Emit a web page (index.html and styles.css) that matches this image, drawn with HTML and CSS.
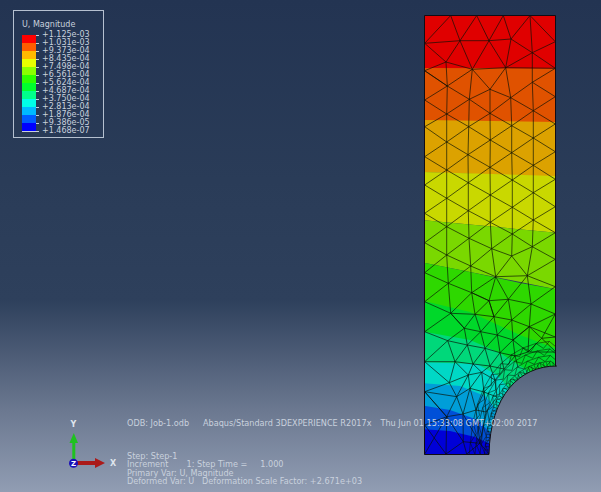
FILE: index.html
```html
<!DOCTYPE html>
<html lang="en">
<head>
<meta charset="utf-8">
<title>Abaqus viewport</title>
<link rel="stylesheet" href="styles.css">
</head>
<body>
<main class="viewport">
  <svg class="model" width="601" height="492" viewBox="0 0 601 492" aria-label="Deformed mesh contour">
    <defs>
      <path id="arc" d="M556.5 366C520 366 490 395 489 454"/>
      <path id="zig" class="ring" d="M556.5 366L550.7 361.1L545.8 366.9L539.6 362.8L535.5 369.4L529 366.5L526 373.9L519.4 372.1L517.2 380.1L510.6 379.5L509.4 387.9L502.9 388.7L502.7 397.5L496.4 400L497.1 409L491.3 413L493 422.100L487.5 428L490.2 437.3L485.4 445L489 454M550.7 361.1L539.6 362.8L529 366.5L519.4 372.1L510.6 379.5L502.9 388.7L496.4 400L491.3 413L487.5 428L485.4 445L484 458"/>
      <clipPath id="body"><path d="M424.5 15.5H555.5V366H556.5C520 366 490 395 489 454.5H424.5Z"/></clipPath>
    </defs>
    <g clip-path="url(#body)">
      <rect class="b1" x="420" y="10" width="140" height="60"/>
      <polygon class="b2" points="420,68 560,68.5 560,123 420,121"/>
      <polygon class="b3" points="420,120 560,122 560,177 420,172"/>
      <polygon class="b4" points="420,172 560,176 560,233 420,220"/>
      <polygon class="b5" points="420,220 560,233 560,290 420,262"/>
      <polygon class="b6" points="420,262 470,272 520,283 560,290 560,380 420,380"/>
      <polygon class="b7" points="420,300 470,312 520,335 560,350 560,400 420,400"/>
      <polygon class="b8" points="420,331 470,340 500,353 530,372 540,400 420,400"/>
      <polygon class="b9" points="420,362 477,364 497,375 515,395 500,430 420,430"/>
      <polygon class="b10" points="420,383 460,386 485,396 505,420 495,440 420,440"/>
      <polygon class="b11" points="420,405 450,410 478,420 495,438 495,460 420,460"/>
      <polygon class="b12" points="420,429 450,431 475,437 495,446 495,460 420,460"/>
      <g class="mesh">
        <path d="M450.7 15.5L424.7 43.3M450.7 15.5L460 40.7M476.7 15.5L460 40.7M476.7 15.5L489 40.7M503.3 15.5L489 40.7M503.3 15.5L511 39M530 15.5L511 39M530 15.5L532.3 52.7M530 15.5L555.3 41.7M424.7 43.3L460 40.7L489 40.7L511 39L532.3 52.7L555.3 41.7M424.7 43.3L446 62L460 40.7L472.3 69.3L489 40.7L505.7 67.7L511 39M505.7 67.7L532.3 52.7L555.3 68.3M424.7 70.7L446 62L472.3 69.3L505.7 67.7L555.3 68.3M424.7 70.7L447.3 86"/>
        <path d="M446 62L447.3 86L446.7 114L446.7 142L446.7 170L446.7 198.3L446.7 226.7L446.7 255L448.3 283.3L450.7 313.3M472.3 69.3L469.3 99.3L468.7 126.7L468 154.7L468.3 182.7L468.3 210.7L469 238.3L470.7 266L471.7 292.7L475 314.3M490 89.3L490 113.3L490.3 140L490 167.3L490.3 195L490.3 222.3L491.7 248.7L495.7 276.7M505.7 67.7L510.7 97.7L511.7 125.7L511.7 152.7L512.3 180L512.3 207.3L512.3 234L511.7 256M532.3 52.7L532.3 82.3L533.3 110.7L533.3 138L533.3 165.3L533.3 192.7L533.3 220L532.3 246.7L527.3 275.7"/>
        <path d="M424.7 70.7L447.3 86L469.3 99.3L490 113.3L511.7 125.7L533.3 138L555.3 151.7M424.7 100L446.7 114L468.7 126.7L490.3 140L511.7 152.7L533.3 165.3L555.3 179.3M424.7 126.7L446.7 142L468 154.7L490 167.3L512.3 180L533.3 192.7L555.3 206.7M424.7 156.7L446.7 170L468.3 182.7L490.3 195L512.3 207.3L533.3 220L555.3 232.7M424.7 185L446.7 198.3L468.3 210.7L490.3 222.3L512.3 234L532.3 246.7L555.3 259.3M424.7 213.3L446.7 226.7L469 238.3L491.7 248.7L511.7 256L527.3 275.7M424.7 242.7L446.7 255L470.7 266L495.7 276.7L508.3 299.3M424.7 272.7L448.3 283.3L471.7 292.7L489 300.7L494 316.7M424.7 301.7L450.7 313.3L464.3 328.3M472.3 69.3L490 89.3L510.7 97.7L533.3 110.7L555.3 124M532.3 82.3L555.3 96.7"/>
        <path d="M424.7 100L447.3 86L472.3 69.3M424.7 126.7L446.7 114L469.3 99.3L490 89.3L505.7 67.7M424.7 156.7L446.7 142L468.7 126.7L490 113.3L510.7 97.7L532.3 82.3L555.3 68.3M424.7 185L446.7 170L468 154.7L490.3 140L511.7 125.7L533.3 110.7L555.3 96.7M424.7 213.3L446.7 198.3L468.3 182.7L490 167.3L511.7 152.7L533.3 138L555.3 124M424.7 242.7L446.7 226.7L468.3 210.7L490.3 195L512.3 180L533.3 165.3L555.3 151.7M424.7 272.7L446.7 255L469 238.3L490.3 222.3L512.3 207.3L533.3 192.7L555.3 179.3M424.7 301.7L448.3 283.3L470.7 266L491.7 248.7L512.3 234L533.3 220L555.3 206.7M424.7 331.7L450.7 313.3L471.7 292.7L495.7 276.7L511.7 256L532.3 246.7L555.3 232.7M527.3 275.7L555.3 259.3"/>
        <path d="M495.7 276.7L527.3 275.7L555.3 286.7M527.3 275.7L531 304L555.3 286.7M508.3 299.3L527.3 275.7M495.7 276.7L489 300.7L508.3 299.3L531 304L555.3 314L529.3 326.7L555.3 337M471.7 292.7L489 300.7L475 314.3M508.3 299.3L494 316.7M508.3 299.3L511.7 320L531 304L529.3 326.7M450.7 313.3L475 314.3L494 316.7L511.7 320L529.3 326.7M489 300.7L494 316.7"/>
        <path d="M424.7 331.7L447.7 340.7L467.3 345L485 348.3L500 352.7L515 356L528 352L541.7 338.3L555.3 337M450.7 313.3L464.3 328.3L475 314.3L480.7 331.7L494 316.7L497.3 335L511.7 320L513 340L529.3 326.7L541.7 338.3L555.3 314M464.3 328.3L480.7 331.7L497.3 335L513 340L529.3 326.7M447.7 340.7L464.3 328.3L467.3 345L480.7 331.7L485 348.3L497.3 335L500 352.7L513 340L515 356M513 340L528 352L529.3 326.7M541.7 338.3L556 352L528 352M424.7 361.7L447.7 340.7L455 361.7L467.3 345L473 364L485 348.3L490 366L500 352.7L504 369L515 356L518 367M424.7 361.7L455 361.7L473 364L490 366L504 369M424.7 361.7L449.3 382.7L455 361.7L468.3 375L473 364L481.7 372.3L490 366L495 380L504 369M424.7 391.7L449.3 382.7L468.3 375L481.7 372.3L495 380M449.3 382.7L456.7 396.7L468.3 375L470 388.3L481.7 372.3L484 392L495 380L497 397M424.7 391.7L456.7 396.7L470 388.3L484 392L497 397M424.7 391.7L446.7 416.7L456.7 396.7L463 414L470 388.3L476 410L484 392L486 412L497 397M424.7 425L446.7 416.7L463 414L476 410L486 412M424.7 425L446 454L446.7 416.7L463.3 441.7L463 414L480 443.3L476 410M424.7 454L446.7 416.7M446 454L463.3 441.7L466.7 454L480 443.3L489 454M463.3 441.7L480 443.3L486 412M446.7 416.7L424.7 391.7"/>
        <use href="#zig"/>
        <use href="#zig" transform="translate(557 455) scale(1.06) translate(-557 -455)"/>
        <use href="#zig" transform="translate(557 455) scale(1.13) translate(-557 -455)"/>
        <use href="#zig" transform="translate(557 455) scale(1.21) translate(-557 -455)"/>
        <use href="#arc" class="ticks t1" transform="translate(557 455) scale(1.025) translate(-557 -455)"/>
      </g>
    </g>
    <path class="outline" d="M424.5 15.5H555.5V366H556.5C520 366 490 395 489 454.5H424.5Z"/>
  </svg>

  <section class="legend">
    <h2 class="legend-title">U, Magnitude</h2>
    <div class="scale">
      <div class="bar">
        <i class="swatch b1"></i><i class="swatch b2"></i><i class="swatch b3"></i><i class="swatch b4"></i>
        <i class="swatch b5"></i><i class="swatch b6"></i><i class="swatch b7"></i><i class="swatch b8"></i>
        <i class="swatch b9"></i><i class="swatch b10"></i><i class="swatch b11"></i><i class="swatch b12"></i>
      </div>
      <ul class="values">
        <li>+1.125e-03</li><li>+1.031e-03</li><li>+9.373e-04</li><li>+8.435e-04</li><li>+7.498e-04</li>
        <li>+6.561e-04</li><li>+5.624e-04</li><li>+4.687e-04</li><li>+3.750e-04</li><li>+2.813e-04</li>
        <li>+1.876e-04</li><li>+9.386e-05</li><li>+1.468e-07</li>
      </ul>
    </div>
  </section>

  <footer class="footer">
    <svg class="triad" width="62" height="62" viewBox="66 419 62 62" aria-label="Axes">
      <text class="axis" x="73.5" y="426.500" text-anchor="middle">Y</text>
      <text class="axis" x="113" y="465.500" text-anchor="middle">X</text>
      <path class="y-axis" d="M72.300 463V443H69.500L73.800 433L78 443H75.300V463Z"/>
      <path class="x-axis" d="M74 461H95V458L105 463L95 468V465H74Z"/>
      <circle class="z-axis" cx="73.500" cy="463.300" r="4.500"/>
      <text class="axis-z" x="73.500" y="466" text-anchor="middle">Z</text>
    </svg>
    <div class="info">
      <p class="info-head"><span class="odb">ODB: Job-1.odb</span><span class="solver">Abaqus/Standard 3DEXPERIENCE R2017x</span><span class="stamp">Thu Jun 01 15:33:08 GMT+02:00 2017</span></p>
      <p class="info-line">Step: Step-1</p>
      <p class="info-line">Increment       1: Step Time =     1.000</p>
      <p class="info-line">Primary Var: U, Magnitude</p>
      <p class="info-line">Deformed Var: U   Deformation Scale Factor: +2.671e+03</p>
    </div>
  </footer>
</main>
</body>
</html>
```

FILE: styles.css
```css
* { box-sizing: border-box; }
html, body { margin: 0; padding: 0; }
body { width: 601px; height: 492px; overflow: hidden; }

.viewport {
  position: relative;
  width: 601px;
  height: 492px;
  display: flex;
  flex-direction: column;
  justify-content: space-between;
  padding: 10px 0 6px 13px;
  font-family: "DejaVu Sans", sans-serif;
  font-size: 8px;
  color: #c9d1dd;
  background: linear-gradient(#233452 0, #2a3c58 180px, #2e405c 300px, #6b7890 410px, #919db3 492px);
}

.model { position: absolute; left: 0; top: 0; }
.mesh path { fill: none; stroke: #0a1206; stroke-width: .75; stroke-opacity: .9; }
.ring { fill: none; stroke: #0a1206; stroke-width: .6; stroke-opacity: .85; vector-effect: non-scaling-stroke; }
.ticks { fill: none; stroke: #0a1206; stroke-opacity: .7; }
.t1 { stroke-width: 4; stroke-dasharray: .6 2.4; }
.outline { fill: none; stroke: #120c14; stroke-width: 1; }

.b1 { fill: #e00000; background: #ff0000; }
.b2 { fill: #e05200; background: #ff5d00; }
.b3 { fill: #dca200; background: #ffb900; }
.b4 { fill: #c9d800; background: #e8ff00; }
.b5 { fill: #7ad800; background: #8bff00; }
.b6 { fill: #2ed800; background: #2eff00; }
.b7 { fill: #00d82a; background: #00ff2e; }
.b8 { fill: #00d87a; background: #00ff8b; }
.b9 { fill: #00d8c6; background: #00ffe8; }
.b10 { fill: #009ed8; background: #00b9ff; }
.b11 { fill: #0050d8; background: #005dff; }
.b12 { fill: #0000d8; background: #0000ff; }

.legend {
  position: relative;
  width: 91px;
  height: 128px;
  padding: 9px 0 0 8px;
  border: 1px solid #b5c0d0;
}
.legend-title { margin: 0; font-size: 8px; font-weight: 400; line-height: 9px; }
.scale { display: flex; margin-top: 2px; }
.bar {
  display: flex;
  flex-direction: column;
  width: 17px;
  height: 97px;
  margin-top: 4px;
  background: repeating-linear-gradient(#c8d0dc 0 1px, transparent 1px 8px);
  padding-right: 3px;
}
.swatch { display: block; height: 8px; flex: none; }
.values {
  list-style: none;
  margin: 0 0 0 3px;
  padding: 0;
}
.values li { height: 8px; line-height: 8px; }

.footer { position: relative; display: flex; align-items: flex-start; margin-left: -13px; }
.triad { margin: 0 0 0 66px; flex: none; }
.axis { fill: #dfe5ed; font-size: 8px; font-weight: 700; }
.axis-z { fill: #fff; font-size: 7px; font-weight: 700; }
.y-axis { fill: #1fc21f; }
.x-axis { fill: #ab1a1a; }
.z-axis { fill: #1a10b8; }

.info { margin-left: -1px; font-size: 8.15px; }
.info p { margin: 0; white-space: pre; line-height: 8.6px; }
.info-head { display: flex; margin-bottom: 24px !important; }
.odb { width: 76px; }
.solver { width: 177.5px; }
```
